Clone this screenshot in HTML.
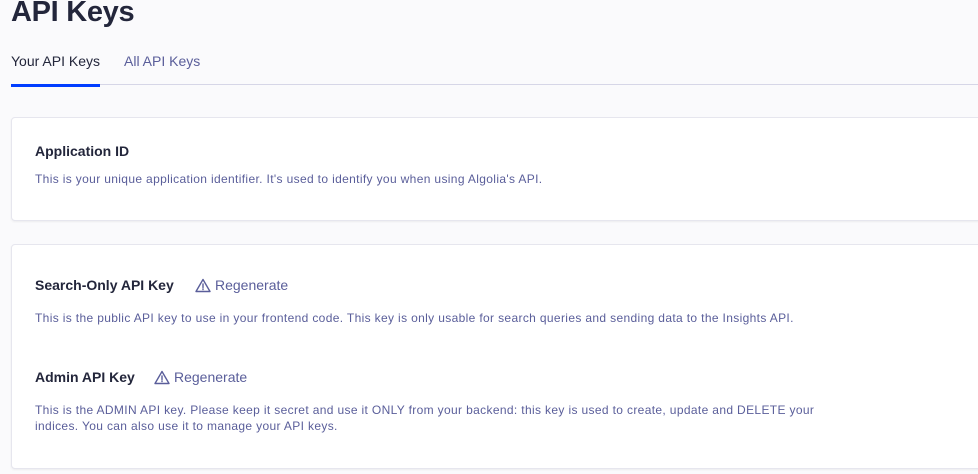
<!DOCTYPE html>
<html><head><meta charset="utf-8"><style>
body{margin:0;background:#fafafc;font-family:"Liberation Sans",sans-serif;width:978px;height:474px;overflow:hidden;position:relative}
h1{position:absolute;left:11px;top:-4px;margin:0;font-size:29px;font-weight:bold;color:#23263b;letter-spacing:-0.3px}
.tabs{position:absolute;left:11px;top:52px;width:967px;height:32px;border-bottom:1px solid #d6d6e7}
.tab{position:absolute;top:1px;font-size:14px}
.t1{left:0;color:#23263b;width:89px;height:31px;border-bottom:3px solid #003dff}
.t2{left:113px;color:#5a5e9a}
.card{position:absolute;left:11px;width:980px;background:#fff;border:1px solid #e6e6ee;border-radius:4px;box-shadow:0 1px 2px rgba(0,0,0,.06)}
.title{position:absolute;left:23px;font-size:14px;font-weight:bold;color:#23263b}
.desc{position:absolute;left:23px;font-size:12px;color:#5a5e9a;line-height:16px;letter-spacing:0.35px}
.reg{position:absolute;font-size:14px;color:#5a5e9a;display:flex;align-items:center;gap:4px}
</style></head><body>
<h1>API Keys</h1>
<div class="tabs"><div class="tab t1">Your API Keys</div><div class="tab t2">All API Keys</div></div>
<div class="card" style="top:117px;height:102px">
<div class="title" style="top:25px">Application ID</div>
<div class="desc" style="top:53px">This is your unique application identifier. It's used to identify you when using Algolia's API.</div>
</div>
<div class="card" style="top:244px;height:223px">
<div class="title" style="top:32px">Search-Only API Key</div>
<div class="reg" style="left:183px;top:32px"><svg width="16" height="15" viewBox="0 0 16 15"><path d="M8 1.5L1 13.5h14z" fill="none" stroke="#5a5e9a" stroke-width="1.4" stroke-linejoin="round"/><path d="M8 6v3.5M8 11v.6" stroke="#5a5e9a" stroke-width="1.4" stroke-linecap="round"/></svg>Regenerate</div>
<div class="desc" style="top:65px">This is the public API key to use in your frontend code. This key is only usable for search queries and sending data to the Insights API.</div>
<div class="title" style="top:124px">Admin API Key</div>
<div class="reg" style="left:142px;top:124px"><svg width="16" height="15" viewBox="0 0 16 15"><path d="M8 1.5L1 13.5h14z" fill="none" stroke="#5a5e9a" stroke-width="1.4" stroke-linejoin="round"/><path d="M8 6v3.5M8 11v.6" stroke="#5a5e9a" stroke-width="1.4" stroke-linecap="round"/></svg>Regenerate</div>
<div class="desc" style="top:157px;width:800px">This is the ADMIN API key. Please keep it secret and use it ONLY from your backend: this key is used to create, update and DELETE your indices. You can also use it to manage your API keys.</div>
</div>
</body></html>
